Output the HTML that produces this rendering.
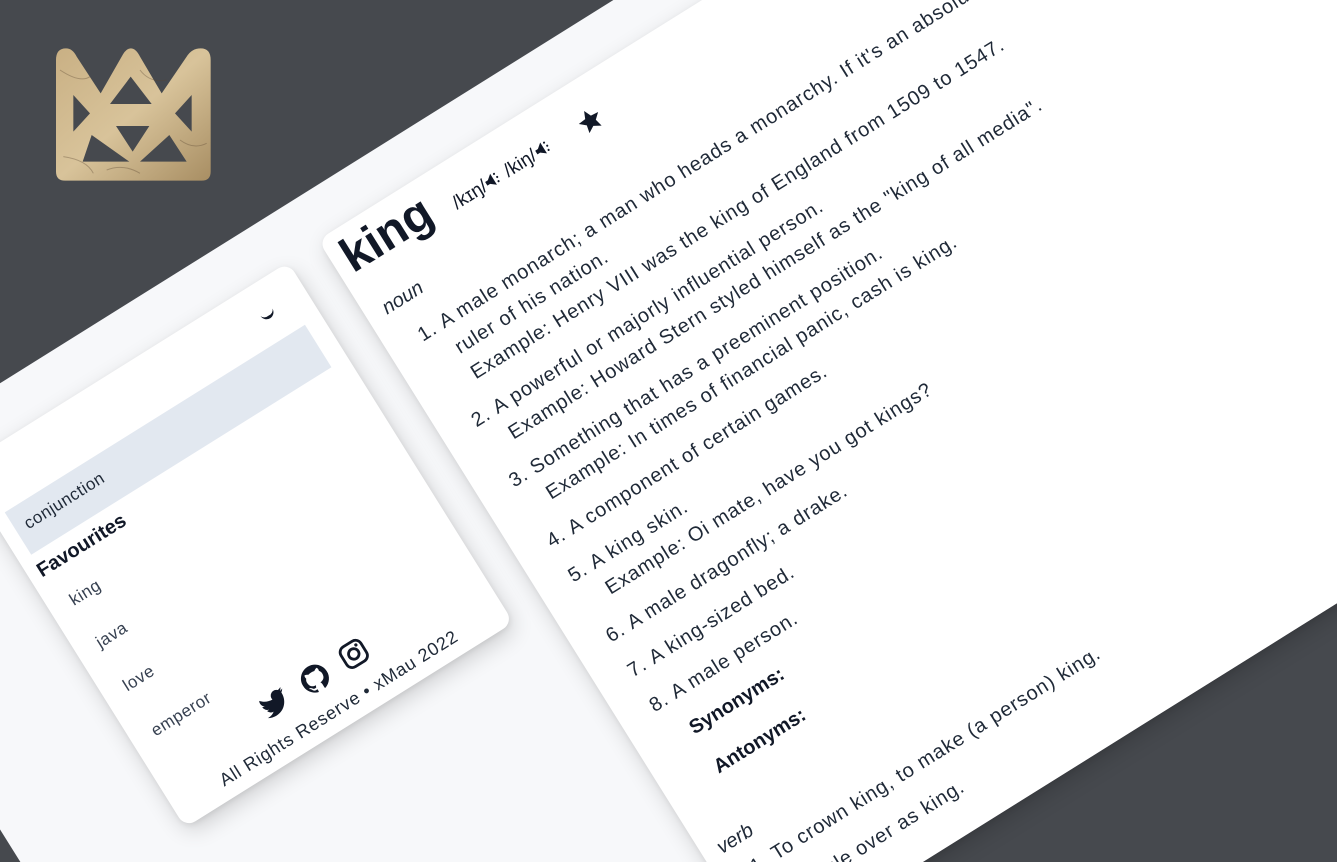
<!DOCTYPE html>
<html><head><meta charset="utf-8">
<style>
html,body{margin:0;padding:0;width:1337px;height:862px;overflow:hidden;}
body{background:#46494e;position:relative;font-family:"Liberation Sans",sans-serif;color:#1f2937;}
.rot{position:absolute;left:318px;top:240px;width:0;height:0;transform-origin:0 0;transform:rotate(-32deg);}
.band{position:absolute;left:-582px;top:-47px;width:3200px;height:895px;background:#f7f8fa;}
.card{position:absolute;background:#fff;border-radius:12px;box-shadow:0 8px 22px rgba(0,0,0,.16),0 2px 6px rgba(0,0,0,.08);overflow:hidden;}
.t{position:absolute;white-space:nowrap;line-height:1;}
.b{font-size:20px;letter-spacing:.9px;color:#1f2937;}
.ic{position:absolute;}
</style></head><body>

<svg style="position:absolute;left:40px;top:30px" width="190" height="170" viewBox="0 0 570 510">
<defs><linearGradient id="g" x1="0" y1="0" x2="1" y2="1">
<stop offset="0" stop-color="#c9b084"/><stop offset=".5" stop-color="#d8c39a"/><stop offset="1" stop-color="#a88e63"/></linearGradient></defs>
<path fill="url(#g)" fill-rule="evenodd" d="M48 90 Q48 55 78 55 Q98 55 110 80 L182 190 L245 80 Q258 55 272 55 Q288 55 300 80 L365 190 L440 80 Q455 55 482 55 Q512 55 512 90 L512 425 Q512 452 485 452 L75 452 Q48 452 48 425 Z
M272 140 L210 222 L335 222 Z
M228 288 L328 288 L278 365 Z
M155 315 L128 395 L268 395 Z
M388 315 L300 395 L440 395 Z
M100 195 L100 305 L150 250 Z
M455 195 L455 305 L405 250 Z"/>
<path fill="none" stroke="#5a4630" stroke-width="3" opacity=".35" d="M60 120 Q120 160 150 140 M70 380 Q140 390 160 430 M300 120 Q330 160 380 150 M420 330 Q460 360 500 340 M200 420 Q250 400 300 430"/>
</svg>

<div class="rot">
<div class="band"></div>

<!-- left card -->
<div class="card" style="left:-424px;top:3px;width:387px;height:425px;">
  <svg class="ic" style="left:333px;top:24px" width="18" height="18" viewBox="0 0 18 18"><path fill="#111827" d="M2 7 A7 7 0 0 0 16 7 A6 5 0 0 1 9 11 A6 5 0 0 1 2 7 Z"/></svg>
  <div style="position:absolute;left:14px;top:62px;width:354px;height:50px;background:#e2e8f0;"></div>
  <div class="t" style="left:25px;top:75px;font-size:17px;color:#1f2937;letter-spacing:.5px;">conjunction</div>
  <div class="t" style="left:11px;top:121px;font-size:20px;font-weight:bold;color:#111827;">Favourites</div>
  <div class="t" style="left:23px;top:164px;font-size:17px;color:#374151;letter-spacing:.6px;">king</div>
  <div class="t" style="left:23px;top:214px;font-size:17px;color:#374151;letter-spacing:.6px;">java</div>
  <div class="t" style="left:23px;top:265px;font-size:17px;color:#374151;letter-spacing:.6px;">love</div>
  <div class="t" style="left:23px;top:318px;font-size:17px;color:#374151;letter-spacing:.6px;">emperor</div>
  <svg class="ic" style="left:128px;top:353px" width="28" height="28" viewBox="0 0 24 24"><path fill="#111827" d="M23.953 4.57a10 10 0 01-2.825.775 4.958 4.958 0 002.163-2.723c-.951.555-2.005.959-3.127 1.184a4.92 4.92 0 00-8.384 4.482C7.69 8.095 4.067 6.13 1.64 3.162a4.822 4.822 0 00-.666 2.475c0 1.710.87 3.213 2.188 4.096a4.904 4.904 0 01-2.228-.616v.06a4.923 4.923 0 003.946 4.827 4.996 4.996 0 01-2.212.085 4.936 4.936 0 004.604 3.417 9.867 9.867 0 01-6.102 2.105c-.39 0-.779-.023-1.17-.067a13.995 13.995 0 007.557 2.209c9.053 0 13.998-7.496 13.998-13.985 0-.21 0-.42-.015-.63A9.935 9.935 0 0024 4.590z"/></svg>
  <svg class="ic" style="left:175px;top:353px" width="28" height="28" viewBox="0 0 24 24"><path fill="#111827" d="M12 .297c-6.63 0-12 5.373-12 12 0 5.303 3.438 9.8 8.205 11.385.6.113.82-.258.82-.577 0-.285-.01-1.04-.015-2.04-3.338.724-4.042-1.61-4.042-1.61C4.422 18.07 3.633 17.7 3.633 17.7c-1.087-.744.084-.729.084-.729 1.205.084 1.838 1.236 1.838 1.236 1.07 1.835 2.809 1.305 3.495.998.108-.776.417-1.305.76-1.605-2.665-.3-5.466-1.332-5.466-5.93 0-1.31.465-2.38 1.235-3.22-.135-.303-.54-1.523.105-3.176 0 0 1.005-.322 3.3 1.23.96-.267 1.98-.399 3-.405 1.02.006 2.04.138 3 .405 2.28-1.552 3.285-1.230 3.285-1.23.645 1.653.24 2.873.12 3.176.765.84 1.23 1.91 1.23 3.22 0 4.61-2.805 5.625-5.475 5.92.42.36.81 1.096.81 2.22 0 1.606-.015 2.896-.015 3.286 0 .315.21.69.825.57C20.565 22.092 24 17.592 24 12.297c0-6.627-5.373-12-12-12"/></svg>
  <svg class="ic" style="left:221px;top:353px" width="28" height="28" viewBox="0 0 24 24"><rect x="2" y="2" width="20" height="20" rx="5.5" fill="none" stroke="#111827" stroke-width="2.4"/><circle cx="12" cy="12" r="4.5" fill="none" stroke="#111827" stroke-width="2.4"/><circle cx="17.6" cy="6.4" r="1.4" fill="#111827"/></svg>
  <div class="t" style="left:0;width:387px;text-align:center;top:396px;font-size:18px;letter-spacing:.8px;color:#1f2937;">All Rights Reserve • xMau 2022</div>
</div>

<!-- main card -->
<div class="card" style="left:0;top:0;width:1500px;height:848px;">
  <div class="t" style="left:12px;top:8px;font-size:48px;font-weight:bold;color:#111827;">king</div>
  <div class="t" style="left:134px;top:33px;font-size:19px;color:#111827;">/kɪŋ/<svg width="18" height="15" viewBox="0 0 16 14" style="vertical-align:-1px"><path fill="#111827" d="M1 5h3l5-4v12l-5-4H1z"/><circle cx="12" cy="3" r="1" fill="#111827"/><circle cx="13" cy="7" r="1" fill="#111827"/><circle cx="12" cy="11" r="1" fill="#111827"/></svg> /kiŋ/<svg width="18" height="15" viewBox="0 0 16 14" style="vertical-align:-1px"><path fill="#111827" d="M1 5h3l5-4v12l-5-4H1z"/><circle cx="12" cy="3" r="1" fill="#111827"/><circle cx="13" cy="7" r="1" fill="#111827"/><circle cx="12" cy="11" r="1" fill="#111827"/></svg></div>
  <svg class="ic" style="left:281px;top:30px" width="26" height="26" viewBox="0 0 24 24"><path fill="#111827" d="M12 1.5l3.1 6.9 7.4.7-5.6 5 1.7 7.4L12 17.6l-6.6 3.9 1.7-7.4-5.6-5 7.4-.7z"/></svg>
  <div class="t" style="left:19px;top:84px;font-size:20px;font-style:italic;color:#1f2937;">noun</div>

  <div class="t b" style="left:35px;top:126px;">1.</div>
  <div class="t b" style="left:60px;top:126px;">A male monarch; a man who heads a monarchy. If it's an absolute monarchy, then he is the supreme</div>
  <div class="t b" style="left:60px;top:156px;">ruler of his nation.</div>
  <div class="t b" style="left:60px;top:186px;">Example: Henry VIII was the king of England from 1509 to 1547.</div>

  <div class="t b" style="left:35px;top:227px;">2.</div>
  <div class="t b" style="left:60px;top:227px;">A powerful or majorly influential person.</div>
  <div class="t b" style="left:60px;top:257px;">Example: Howard Stern styled himself as the "king of all media".</div>

  <div class="t b" style="left:35px;top:298px;">3.</div>
  <div class="t b" style="left:60px;top:298px;">Something that has a preeminent position.</div>
  <div class="t b" style="left:60px;top:328px;">Example: In times of financial panic, cash is king.</div>

  <div class="t b" style="left:35px;top:369px;">4.</div>
  <div class="t b" style="left:60px;top:369px;">A component of certain games.</div>

  <div class="t b" style="left:35px;top:410px;">5.</div>
  <div class="t b" style="left:60px;top:410px;">A king skin.</div>
  <div class="t b" style="left:60px;top:440px;">Example: Oi mate, have you got kings?</div>

  <div class="t b" style="left:35px;top:481px;">6.</div>
  <div class="t b" style="left:60px;top:481px;">A male dragonfly; a drake.</div>
  <div class="t b" style="left:35px;top:522px;">7.</div>
  <div class="t b" style="left:60px;top:522px;">A king-sized bed.</div>
  <div class="t b" style="left:35px;top:563px;">8.</div>
  <div class="t b" style="left:60px;top:563px;">A male person.</div>

  <div class="t" style="left:57px;top:603px;font-size:20px;font-weight:bold;color:#111827;">Synonyms:</div>
  <div class="t" style="left:57px;top:649px;font-size:20px;font-weight:bold;color:#111827;">Antonyms:</div>

  <div class="t" style="left:17px;top:719px;font-size:20px;font-style:italic;color:#1f2937;">verb</div>
  <div class="t b" style="left:35px;top:753px;">1.</div>
  <div class="t b" style="left:60px;top:753px;">To crown king, to make (a person) king.</div>
  <div class="t b" style="left:35px;top:794px;">2.</div>
  <div class="t b" style="left:60px;top:794px;">To rule over as king.</div>
</div>
</div>
</body></html>
